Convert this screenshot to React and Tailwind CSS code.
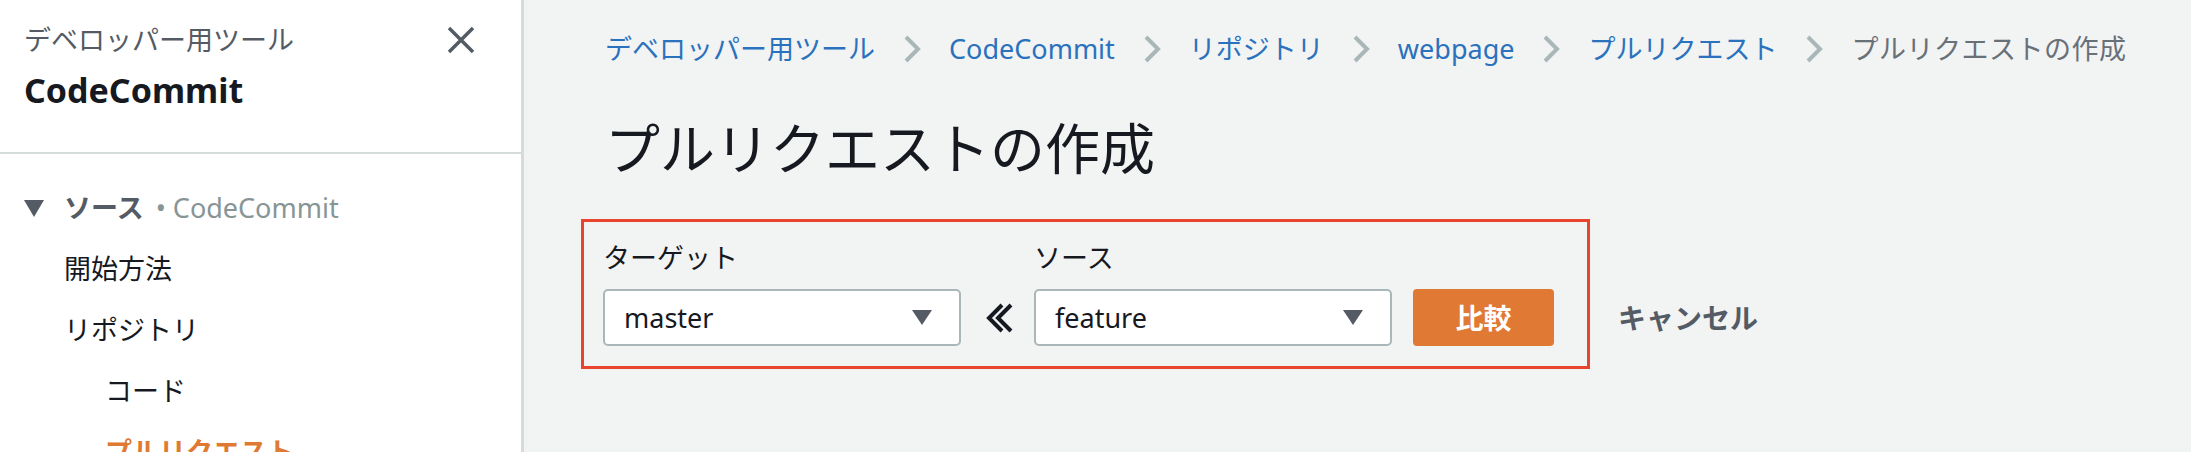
const crumbs = [
  { label: "デベロッパー用ツール" },
  { label: "CodeCommit" },
  { label: "リポジトリ" },
  { label: "webpage" },
  { label: "プルリクエスト" },
];

const Chevron = () => (
  <svg width="20" height="28" viewBox="0 0 20 28" className="shrink-0">
    <polyline points="4,2 16,14 4,26" fill="none" stroke="#aab7b8" strokeWidth="4" />
  </svg>
);

const Caret = () => (
  <svg width="20" height="15" viewBox="0 0 20 15">
    <polygon points="0,0 20,0 10,15" fill="#545b64" />
  </svg>
);

const Select = ({ value }) => (
  <div className="flex h-[57px] w-[358px] items-center justify-between rounded-[5px] border-2 border-[#aab7b8] bg-white pl-[19px] pr-[27px]">
    <span className="text-[27px] leading-[36px] text-[#16191f]">{value}</span>
    <Caret />
  </div>
);

const NavItem = ({ children, className = "" }) => (
  <div className={`flex h-[61px] items-center text-[27px] ${className}`}>{children}</div>
);

export default function App() {
  return (
    <div className="flex h-[452px] w-[2191px] overflow-hidden bg-[#f2f3f3] font-['Noto_Sans','Noto_Sans_CJK_JP',sans-serif]">
      {/* side navigation */}
      <aside className="w-[524px] shrink-0 border-r-[3px] border-[#d5dbdb] bg-white">
        <div className="h-[154px] border-b-2 border-[#d5dbdb] px-[24px] pt-[22px]">
          <div className="flex items-center justify-between pr-[22px]">
            <span className="text-[27px] leading-[36px] text-[#545b64]">デベロッパー用ツール</span>
            <svg width="28" height="28" viewBox="0 0 28 28">
              <path d="M2 2 L26 26 M26 2 L2 26" stroke="#545b64" strokeWidth="3.5" />
            </svg>
          </div>
          <div className="mt-[10px] text-[34px] font-bold leading-[44px] text-[#16191f]">CodeCommit</div>
        </div>
        <nav className="pl-[24px] pt-[24px]">
          <NavItem>
            <svg width="20" height="17" viewBox="0 0 20 17" className="mr-[20px]">
              <polygon points="0,0 20,0 10,17" fill="#545b64" />
            </svg>
            <span className="font-bold text-[#545b64]">ソース</span>
            <span className="ml-[12px] text-[#879596]">• CodeCommit</span>
          </NavItem>
          <NavItem className="pl-[40px] text-[#16191f]">開始方法</NavItem>
          <NavItem className="pl-[40px] text-[#16191f]">リポジトリ</NavItem>
          <NavItem className="pl-[81px] text-[#16191f]">コード</NavItem>
          <NavItem className="pl-[81px] font-bold text-[#e07a33]">プルリクエスト</NavItem>
        </nav>
      </aside>

      {/* main content */}
      <main className="flex-1 pl-[57px]">
        <div className="flex items-center gap-[27px] pl-[24px] pt-[31px] text-[27px] leading-[36px]">
          {crumbs.map((c) => (
            <div key={c.label} className="flex items-center gap-[27px]">
              <span className="text-[#2a72bd]">{c.label}</span>
              <Chevron />
            </div>
          ))}
          <span className="text-[#687078] tracking-[0.5px]">プルリクエストの作成</span>
        </div>

        <h1 className="mt-[49px] pl-[24px] text-[55px] font-normal leading-[64px] text-[#16191f]">
          プルリクエストの作成
        </h1>

        <div className="mt-[39px] flex items-end">
          <div className="flex items-end gap-[21px] border-[3px] border-[#e9442e] pb-[20px] pl-[19px] pr-[33px] pt-[18px]">
            <div>
              <div className="mb-[13px] text-[27px] leading-[36px] text-[#16191f]">ターゲット</div>
              <Select value="master" />
            </div>
            <div className="flex h-[57px] items-center">
              <svg width="31" height="30" viewBox="0 0 31 30">
                <polyline points="20,2 7,15 20,28" fill="none" stroke="#16191f" strokeWidth="4" />
                <polyline points="29,2 16,15 29,28" fill="none" stroke="#16191f" strokeWidth="4" />
              </svg>
            </div>
            <div>
              <div className="mb-[13px] text-[27px] leading-[36px] text-[#16191f]">ソース</div>
              <Select value="feature" />
            </div>
            <button className="flex h-[57px] w-[141px] items-center justify-center rounded-[4px] bg-[#e07934] text-[28px] font-bold text-white">
              比較
            </button>
          </div>
          <span className="mb-[33px] ml-[28px] text-[28px] font-bold leading-[36px] text-[#545b64]">キャンセル</span>
        </div>
      </main>
    </div>
  );
}
